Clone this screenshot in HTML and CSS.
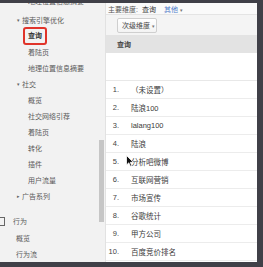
FILE: index.html
```html
<!DOCTYPE html>
<html lang="zh-CN">
<head>
  <meta charset="UTF-8">
  <meta name="viewport" content="width=device-width, initial-scale=1.0">
  <title>查询</title>
  <link rel="stylesheet" href="styles.css">
</head>
<body>
  <div class="window">
    <aside class="sidebar">
      <ul class="nav">
        <li class="nav-item cut">地理位置信息摘要</li>
        <li class="nav-group"><span class="caret">▾</span>搜索引擎优化</li>
        <li class="nav-item"><span class="highlight">查询</span></li>
        <li class="nav-item">着陆页</li>
        <li class="nav-item">地理位置信息摘要</li>
        <li class="nav-group"><span class="caret">▾</span>社交</li>
        <li class="nav-item">概览</li>
        <li class="nav-item">社交网络引荐</li>
        <li class="nav-item">着陆页</li>
        <li class="nav-item">转化</li>
        <li class="nav-item">插件</li>
        <li class="nav-item">用户流量</li>
        <li class="nav-group closed"><span class="caret">▸</span>广告系列</li>
        <li class="nav-section"><span class="section-icon"></span>行为</li>
        <li class="nav-sub">概览</li>
        <li class="nav-sub">行为流</li>
      </ul>
      <div class="scrollbar"><div class="thumb"></div></div>
    </aside>

    <main class="report">
      <div class="dim-bar">
        <span class="dim-label">主要维度:</span>
        <span class="dim-active">查询</span>
        <span class="dim-other">其他 <span class="tiny-caret">▾</span></span>
      </div>
      <div class="sub-bar">
        <button class="dropdown">次级维度 <span class="tiny-caret">▾</span></button>
      </div>
      <div class="table-head">查询</div>
      <div class="summary-row"></div>
      <ol class="rows">
        <li><span class="num">1.</span><span class="query">（未设置）</span></li>
        <li><span class="num">2.</span><span class="query">陆浪100</span></li>
        <li><span class="num">3.</span><span class="query">lalang100</span></li>
        <li><span class="num">4.</span><span class="query">陆浪</span></li>
        <li><span class="num">5.</span><span class="query">分析吧微博</span></li>
        <li><span class="num">6.</span><span class="query">互联网营销</span></li>
        <li><span class="num">7.</span><span class="query">市场宣传</span></li>
        <li><span class="num">8.</span><span class="query">谷歌统计</span></li>
        <li><span class="num">9.</span><span class="query">甲方公司</span></li>
        <li><span class="num">10.</span><span class="query">百度竞价排名</span></li>
      </ol>
    </main>
  </div>

  <svg class="pointer" width="8" height="12" viewBox="0 0 8 12">
    <path d="M0.5 0.5 L0.5 10 L2.8 7.8 L4.4 11.3 L5.8 10.7 L4.3 7.3 L7.3 7.3 Z" fill="#111" stroke="#fff" stroke-width="0.8"/>
  </svg>
</body>
</html>
```

FILE: styles.css
```css
body {
  margin: 0;
  height: 267px;
  overflow: hidden;
  background-color: #404048; /* dark window frame */
  font-family: "Liberation Sans", "Noto Sans CJK SC", sans-serif;
  font-size: 7px;
  color: #5a5a5a;
}
.window {
  display: flex;
  height: 259px;
  margin: 3px 6px 0 0;
  overflow: hidden;
  background: #fff;
}

/* left navigation */
.sidebar {
  display: flex;
  width: 105px;
  flex-shrink: 0;
  background-color: #f2f2f2;
  border-right: 1px solid #e2e2e2;
}
.nav {
  flex: 1;
  list-style: none;
  margin: -14px 0 0;
  padding: 0;
}
.nav li {
  display: flex;
  align-items: center;
  height: 16px;
  white-space: nowrap;
}
.nav li.cut {
  height: 23px;
}
.nav-item {
  padding-left: 28px;
}
.nav-group {
  padding-left: 17px;
}
.caret {
  width: 5px;
  font-size: 5px;
  color: #666;
}
.highlight {
  display: inline-block;
  line-height: 10px;
  padding: 2px 3px;
  margin: -4px -5px;
  border: 2px solid #e0342a;
  border-radius: 3px;
  color: #333;
  font-weight: bold;
}
.nav li.nav-section {
  height: 18px;
  margin-top: 8px;
  padding-left: 0;
}
.section-icon {
  width: 7px;
  height: 7px;
  margin-left: -4px;
  margin-right: 8px;
  border: 1px solid #666;
}
.nav-sub {
  padding-left: 16px;
}
.scrollbar {
  width: 5px;
  margin-right: 1px;
}
.thumb {
  height: 82px;
  margin-top: 137px;
  background-color: #c6c6c6;
}

/* report panel */
.report {
  flex: 1;
  color: #3a3a3a;
}
.dim-bar {
  display: flex;
  align-items: center;
  gap: 4px;
  height: 12px;
  padding-left: 2px;
  background: #fafafa;
  border-bottom: 1px solid #e4e4e4;
  box-sizing: border-box;
  color: #555;
}
.dim-active {
  color: #333;
  margin-right: 4px;
}
.dim-other {
  color: #4a78c8;
}
.tiny-caret {
  font-size: 5px;
  color: #777;
}
.sub-bar {
  display: flex;
  align-items: center;
  height: 20px;
  padding-left: 11px;
  background: #f4f4f4;
}
.dropdown {
  height: 15px;
  width: 40px;
  padding: 0 0 0 4px;
  text-align: left;
  font: inherit;
  color: #444;
  background: linear-gradient(#fff, #f3f3f3);
  border: 1px solid #cfcfcf;
  border-radius: 2px;
}
.table-head {
  display: flex;
  align-items: center;
  height: 18px;
  padding-left: 11px;
  background-color: #e3e3e3;
  font-weight: bold;
  color: #444;
}
.summary-row {
  height: 28px;
  border-bottom: 1px solid #e8e8e8;
  box-sizing: border-box;
}
.rows {
  list-style: none;
  margin: 0;
  padding: 0;
  font-size: 7.5px;
}
.rows li {
  display: flex;
  align-items: center;
  height: 18px;
  border-bottom: 1px solid #ececec;
  box-sizing: border-box;
}
.num {
  width: 13px;
  text-align: right;
  margin-right: 12px;
  color: #444;
}
.pointer {
  position: absolute;
  left: 126px;
  top: 155px;
}
```
